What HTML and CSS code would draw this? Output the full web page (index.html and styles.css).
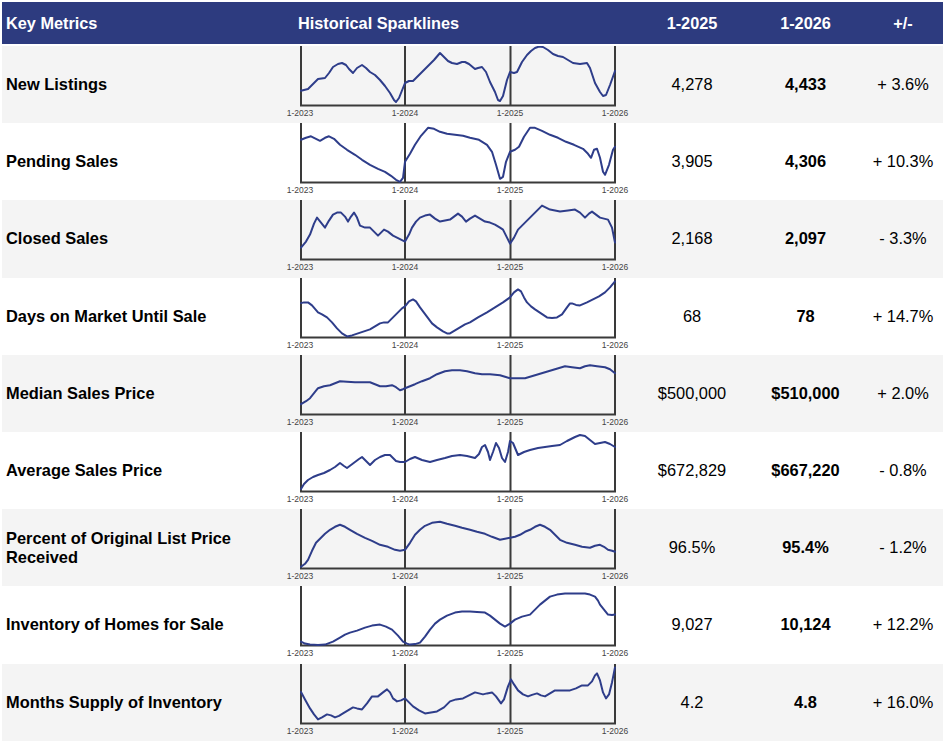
FILE: index.html
```html
<!DOCTYPE html>
<html>
<head>
<meta charset="utf-8">
<link rel="stylesheet" href="styles.css">
</head>
<body>
<div class="table">
  <div class="head">
    <div class="hc label">Key Metrics</div>
    <div class="hc spark-h">Historical Sparklines</div>
    <div class="hc num">1-2025</div>
    <div class="hc num">1-2026</div>
    <div class="hc num">+/-</div>
  </div>

  <div class="row">
    <div class="label">New Listings</div>
    <svg class="spark" viewBox="280 46 356 77">
      <g class="axis"><path d="M301 46V105.5H615V46M405 46V105.5M510.5 46V105.5"/></g>
      <g class="tick"><text x="300" y="116">1-2023</text><text x="405" y="116">1-2024</text><text x="510" y="116">1-2025</text><text x="615" y="116">1-2026</text></g>
      <polyline class="line" points="301,90.7 308,89 313,84 318,79 325,78 329,73 333,67 338,64 342,63 346,65 349,69 353,73 357,68 362,65 366,68 370,72 375,75 380,80 385,86 390,93 394,100 396,102 399,98 405,83 409,81 413,81 420,74 427,67 434,60 440,53 444,57 448,61 452,63 457,64 462,62 465,62 469,64 475,69 478,68 482,67 486,72 490,82 495,92 498,100 500,101 503,96 507,80 510,72 514,73 517,72 522,62 527,55 531,51 535,48 539,46.5 543,47 548,50 553,54 558,56 563,57 568,60 573,63 580,64 587,63 590,68 595,83 600,92 603,96 606,95 610,85 615,71"/>
    </svg>
    <div class="num">4,278</div>
    <div class="num b">4,433</div>
    <div class="num">+ 3.6%</div>
  </div>

  <div class="row">
    <div class="label">Pending Sales</div>
    <svg class="spark" viewBox="280 123.2 356 77">
      <g class="axis"><path d="M301 123.2V182.7H615V123.2M405 123.2V182.7M510.5 123.2V182.7"/></g>
      <g class="tick"><text x="300" y="193.2">1-2023</text><text x="405" y="193.2">1-2024</text><text x="510" y="193.2">1-2025</text><text x="615" y="193.2">1-2026</text></g>
      <polyline class="line" points="301,140 306,138 311,136.5 316,139 320,141 325,138 329,136.5 334,139 340,145 347,150 355,155 362,160 370,165 378,169 385,172 391,176 396,180 400,182 403,178 405,162 410,154 415,145 421,136 428,128 434,129 440,132 447,134 455,135 463,136 470,138 479,140 487,145 492,152 496,165 500,179 503,177 506,162 510,152 515,150 519,147 524,137 530,128 535,128 542,131 550,135 558,138 566,142 574,145 583,149 588,154 591,158 594,150 597,149 600,158 603,172 605,175 609,165 613,150 615,147"/>
    </svg>
    <div class="num">3,905</div>
    <div class="num b">4,306</div>
    <div class="num">+ 10.3%</div>
  </div>

  <div class="row">
    <div class="label">Closed Sales</div>
    <svg class="spark" viewBox="280 200.4 356 77">
      <g class="axis"><path d="M301 200.4V259.9H615V200.4M405 200.4V259.9M510.5 200.4V259.9"/></g>
      <g class="tick"><text x="300" y="270.4">1-2023</text><text x="405" y="270.4">1-2024</text><text x="510" y="270.4">1-2025</text><text x="615" y="270.4">1-2026</text></g>
      <polyline class="line" points="301,248 306,242 310,235 314,224 317,218 321,223 325,228 329,221 333,215 337,213 341,213 345,217 348,222 351,217 354,213 357,218 360,226 365,228 370,228 374,232 378,236 381,233 384,230 388,232 393,236 399,239 405,242 409,235 412,228 416,222 420,218 425,216 430,215 435,219 440,222 445,221 450,220 454,217 458,214 462,217 466,222 470,219 475,216 480,219 485,222 490,223 495,225 500,228 503,230 507,238 510,244 514,238 518,230 524,224 530,218 536,212 542,206 546,208 550,210 555,211 560,212 568,211 575,210 580,213 585,218 589,214 592,212 596,215 600,218 604,219 608,220 612,228 615,243"/>
    </svg>
    <div class="num">2,168</div>
    <div class="num b">2,097</div>
    <div class="num">- 3.3%</div>
  </div>

  <div class="row">
    <div class="label">Days on Market Until Sale</div>
    <svg class="spark" viewBox="280 277.6 356 77">
      <g class="axis"><path d="M301 277.6V337.1H615V277.6M405 277.6V337.1M510.5 277.6V337.1"/></g>
      <g class="tick"><text x="300" y="347.6">1-2023</text><text x="405" y="347.6">1-2024</text><text x="510" y="347.6">1-2025</text><text x="615" y="347.6">1-2026</text></g>
      <polyline class="line" points="301,302.7 304,302 308,302 312,305 318,312 322,314 327,317 332,322 337,328 342,333 347,336 352,335 358,333 364,331 370,329 375,326 380,323 384,322 388,322 393,317 398,312 402,308 405,306 409,301 413,299 416,301 420,307 426,315 432,323 437,327 443,331 447,333 450,333 455,330 460,327 465,324 470,322 478,317 487,312 495,307 503,302 510,297 514,292 518,289 521,291 524,297 527,302 531,306 535,309 541,313 547,317 552,317.5 557,317 562,314 567,307 570,303 572,303 576,304.5 580,305 587,302 593,299 599,296 605,292 610,287 615,281"/>
    </svg>
    <div class="num">68</div>
    <div class="num b">78</div>
    <div class="num">+ 14.7%</div>
  </div>

  <div class="row">
    <div class="label">Median Sales Price</div>
    <svg class="spark" viewBox="280 354.8 356 77">
      <g class="axis"><path d="M301 354.8V414.3H615V354.8M405 354.8V414.3M510.5 354.8V414.3"/></g>
      <g class="tick"><text x="300" y="424.8">1-2023</text><text x="405" y="424.8">1-2024</text><text x="510" y="424.8">1-2025</text><text x="615" y="424.8">1-2026</text></g>
      <polyline class="line" points="301,404 306,401 310,398 314,393 318,388 324,386 330,385 335,383 340,381 347,381.5 355,382 362,382 370,382 375,384 380,386 386,386 392,385 396,387 400,390 403,389 405,388 410,386 415,384 422,381 430,378 437,374 445,371 452,370 460,370 467,371 475,373 482,374 490,374 495,374.5 500,375 505,376.5 510,378 517,378 525,378 535,375 545,372 555,369 565,366 572,367 580,368 585,366 590,365 597,366 605,367 610,369 615,373"/>
    </svg>
    <div class="num">$500,000</div>
    <div class="num b">$510,000</div>
    <div class="num">+ 2.0%</div>
  </div>

  <div class="row">
    <div class="label">Average Sales Price</div>
    <svg class="spark" viewBox="280 432 356 77">
      <g class="axis"><path d="M301 432V491.5H615V432M405 432V491.5M510.5 432V491.5"/></g>
      <g class="tick"><text x="300" y="502">1-2023</text><text x="405" y="502">1-2024</text><text x="510" y="502">1-2025</text><text x="615" y="502">1-2026</text></g>
      <polyline class="line" points="301,489 304,484 308,480 313,477 318,475 324,473 330,470 335,467 340,463 344,466 347,468 351,465 355,462 359,459 362,457 366,461 370,465 375,460 380,457 385,455 390,455 393,458 396,461 400,462 405,462 410,459 415,457 422,460 430,462 437,460 445,458 452,456 460,455 467,456 475,458 479,454 482,447 485,445 488,452 490,460 493,452 496,443 499,448 502,458 505,462 508,452 510,441 513,443 518,455 524,452 530,450 538,448 545,447 552,446 560,445 567,441 575,437 580,435 585,436 590,440 595,444 600,443 605,442 610,444 615,447"/>
    </svg>
    <div class="num">$672,829</div>
    <div class="num b">$667,220</div>
    <div class="num">- 0.8%</div>
  </div>

  <div class="row">
    <div class="label">Percent of Original List Price Received</div>
    <svg class="spark" viewBox="280 509.2 356 77">
      <g class="axis"><path d="M301 509.2V568.7H615V509.2M405 509.2V568.7M510.5 509.2V568.7"/></g>
      <g class="tick"><text x="300" y="579.2">1-2023</text><text x="405" y="579.2">1-2024</text><text x="510" y="579.2">1-2025</text><text x="615" y="579.2">1-2026</text></g>
      <polyline class="line" points="301,567 305,564 308,560 312,551 316,543 320,539 325,534 330,530 335,527 340,525 345,527 350,530 357,534 365,538 372,541 380,545 388,547 395,550 400,551 405,550 410,543 415,535 420,530 425,526 432,523 440,522 447,524 455,526 462,528 470,530 477,532 485,534 492,537 500,540 505,539 510,538 515,537 520,535 525,532 530,530 535,527 540,525 545,527 550,530 555,535 560,540 567,543 575,545 582,547 590,548 595,546 600,545 604,547 608,550 612,551 615,552"/>
    </svg>
    <div class="num">96.5%</div>
    <div class="num b">95.4%</div>
    <div class="num">- 1.2%</div>
  </div>

  <div class="row">
    <div class="label">Inventory of Homes for Sale</div>
    <svg class="spark" viewBox="280 586.4 356 77">
      <g class="axis"><path d="M301 586.4V645.9H615V586.4M405 586.4V645.9M510.5 586.4V645.9"/></g>
      <g class="tick"><text x="300" y="656.4">1-2023</text><text x="405" y="656.4">1-2024</text><text x="510" y="656.4">1-2025</text><text x="615" y="656.4">1-2026</text></g>
      <polyline class="line" points="301,642 305,644 310,645 318,645.5 325,645 333,642 340,638 345,635 350,633 357,631 365,628 372,626 380,625 386,627 392,630 398,636 403,642 407,644 410,645 415,644.5 420,643 425,637 430,630 435,624 440,620 447,616 455,613 462,612 470,612 477,612.5 485,613 490,616 495,620 500,624 505,627 510,624 515,620 522,617 530,615 535,610 540,605 545,601 550,597 557,595 565,594 575,594 585,594 590,595 595,597 598,601 600,605 604,610 608,615 612,615.5 615,615"/>
    </svg>
    <div class="num">9,027</div>
    <div class="num b">10,124</div>
    <div class="num">+ 12.2%</div>
  </div>

  <div class="row">
    <div class="label">Months Supply of Inventory</div>
    <svg class="spark" viewBox="280 663.6 356 77">
      <g class="axis"><path d="M301 663.6V723.1H615V663.6M405 663.6V723.1M510.5 663.6V723.1"/></g>
      <g class="tick"><text x="300" y="733.6">1-2023</text><text x="405" y="733.6">1-2024</text><text x="510" y="733.6">1-2025</text><text x="615" y="733.6">1-2026</text></g>
      <polyline class="line" points="301,691.7 305,699 310,708 314,714 318,719 322,717 327,714 331,715 335,717 339,715.5 343,713 348,710 353,707 357,708 362,709 367,703 372,696 375,696 378,696 383,692 387,689 390,692 393,698 397,701 401,700 405,698 409,702 413,706 419,710 425,713 431,712 437,711 444,707 450,701 456,699 463,698 469,695 475,692 479,693 483,694 487,693 492,692 496,696 501,703 504,699 508,686 511,679 514,684 518,690 523,694 528,696 532,694.5 537,693 541,695 545,696 550,693 555,690 562,690 570,690 576,688 582,685 585,685 588,685 592,681 595,675 597,673 600,680 603,692 606,698 609,694 612,682 615,667"/>
    </svg>
    <div class="num">4.2</div>
    <div class="num b">4.8</div>
    <div class="num">+ 16.0%</div>
  </div>
</div>
</body>
</html>
```

FILE: styles.css
```css
html, body {
  margin: 0;
  padding: 0;
  background: #ffffff;
}

body {
  font-family: "Liberation Sans", Arial, Helvetica, sans-serif;
  color: #000000;
}

.table {
  margin: 2px 2px 0 2px;
  width: 941px;
}

.head,
.row {
  display: grid;
  grid-template-columns: 278px 356px 112px 115px 80px;
  align-items: center;
}

.head {
  height: 42px;
  margin-bottom: 2px;
  background: #2d3b7f;
  color: #ffffff;
  font-weight: bold;
  font-size: 16.3px;
}

.hc.label {
  padding-left: 4px;
}

.hc.spark-h {
  padding-left: 18px;
}

.row {
  height: 77.2px;
  font-size: 16.4px;
}

.row:nth-child(even) {
  background: #f4f4f4;
}

.row:nth-child(odd) {
  background: #ffffff;
}

.label {
  padding-left: 4px;
  padding-right: 20px;
  font-weight: bold;
  line-height: 19px;
}

.head .label {
  line-height: normal;
}

.num {
  text-align: center;
}

.num.b {
  font-weight: bold;
}

.spark {
  display: block;
  width: 356px;
  height: 77px;
  align-self: start;
}

.axis path {
  fill: none;
  stroke: #3a3a3a;
  stroke-width: 2;
}

.tick text {
  font-family: "Liberation Sans", Arial, sans-serif;
  font-size: 8.5px;
  fill: #444444;
  text-anchor: middle;
}

.line {
  fill: none;
  stroke: #2e3d8a;
  stroke-width: 2;
  stroke-linejoin: round;
  stroke-linecap: round;
}
```
